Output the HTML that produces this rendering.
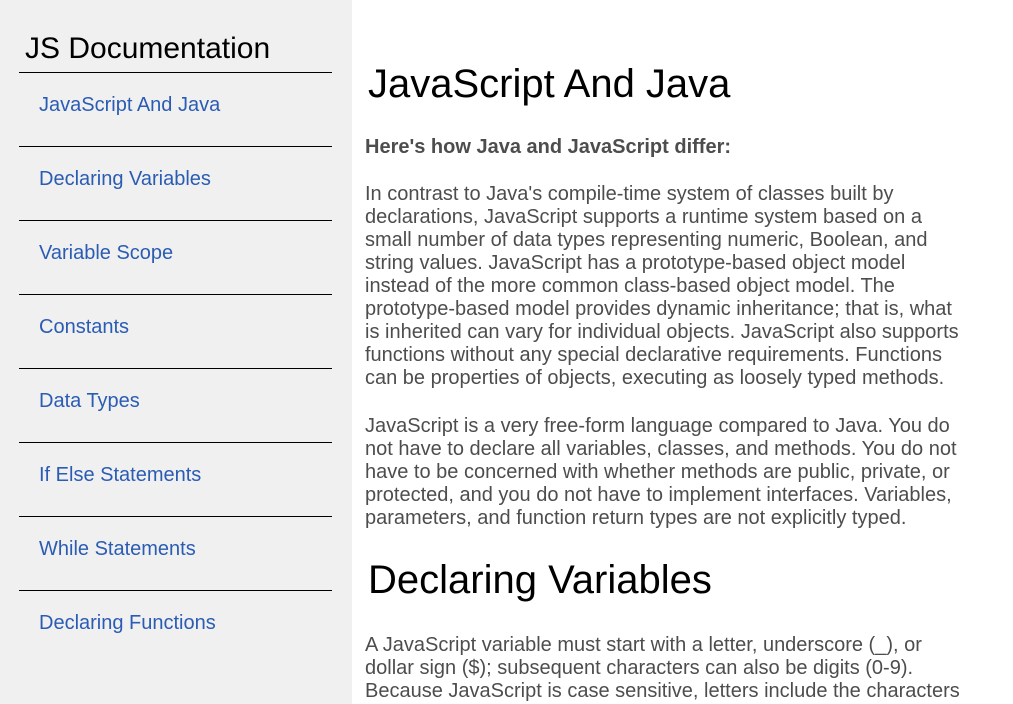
<!DOCTYPE html>
<html><head><meta charset="utf-8"><style>
html,body{margin:0;padding:0;width:1013px;height:704px;overflow:hidden;background:#fff;font-family:"Liberation Sans",Arial,sans-serif;}
#nav{position:absolute;left:0;top:0;width:352px;height:704px;background:#f0f0f0;}
#nav h2{position:absolute;left:25px;top:31px;margin:0;font-weight:normal;font-size:30px;line-height:36px;color:#000;}
.ln{position:absolute;left:19px;width:313px;height:1px;background:#000;}
.lk{position:absolute;left:39px;font-size:20px;line-height:24px;color:#2a5cb4;}
.m{position:absolute;left:365px;font-size:20px;line-height:23px;color:#4d4d4d;white-space:nowrap;}
.h{position:absolute;left:368px;font-size:40px;line-height:46px;color:#000;}
</style></head><body>
<div id="nav">
<h2>JS Documentation</h2>
<div class="ln" style="top:72px"></div>
<div class="lk" style="top:93px">JavaScript And Java</div>
<div class="ln" style="top:146px"></div>
<div class="lk" style="top:167px">Declaring Variables</div>
<div class="ln" style="top:220px"></div>
<div class="lk" style="top:241px">Variable Scope</div>
<div class="ln" style="top:294px"></div>
<div class="lk" style="top:315px">Constants</div>
<div class="ln" style="top:368px"></div>
<div class="lk" style="top:389px">Data Types</div>
<div class="ln" style="top:442px"></div>
<div class="lk" style="top:463px">If Else Statements</div>
<div class="ln" style="top:516px"></div>
<div class="lk" style="top:537px">While Statements</div>
<div class="ln" style="top:590px"></div>
<div class="lk" style="top:611px">Declaring Functions</div>
</div>
<div class="h" style="top:61px">JavaScript And Java</div>
<div class="m" style="top:136px;font-weight:bold">Here's how Java and JavaScript differ:</div>
<div class="m" style="top:183px">In contrast to Java's compile-time system of classes built by<br>declarations, JavaScript supports a runtime system based on a<br>small number of data types representing numeric, Boolean, and<br>string values. JavaScript has a prototype-based object model<br>instead of the more common class-based object model. The<br>prototype-based model provides dynamic inheritance; that is, what<br>is inherited can vary for individual objects. JavaScript also supports<br>functions without any special declarative requirements. Functions<br>can be properties of objects, executing as loosely typed methods.</div>
<div class="m" style="top:415px">JavaScript is a very free-form language compared to Java. You do<br>not have to declare all variables, classes, and methods. You do not<br>have to be concerned with whether methods are public, private, or<br>protected, and you do not have to implement interfaces. Variables,<br>parameters, and function return types are not explicitly typed.</div>
<div class="h" style="top:557px">Declaring Variables</div>
<div class="m" style="top:634px">A JavaScript variable must start with a letter, underscore (_), or<br>dollar sign ($); subsequent characters can also be digits (0-9).<br>Because JavaScript is case sensitive, letters include the characters</div>
</body></html>
